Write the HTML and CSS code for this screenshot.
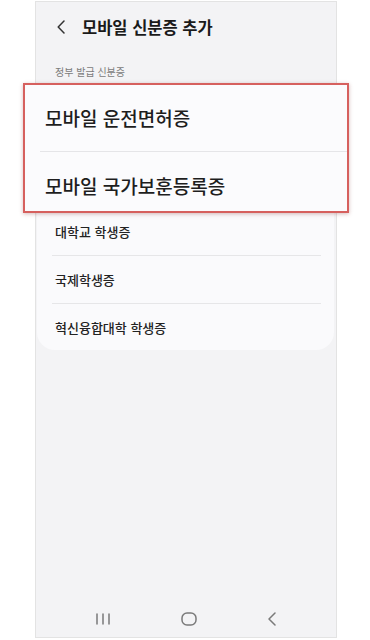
FILE: index.html
```html
<!DOCTYPE html>
<html lang="ko">
<head>
<meta charset="utf-8">
<link rel="stylesheet" href="styles.css">
</head>
<body>
<div class="phone">
  <div class="header">
    <svg class="back" width="8" height="14" viewBox="0 0 8 14"><path d="M7 1 L1.2 7 L7 13" fill="none" stroke="#333" stroke-width="1.5" stroke-linecap="round" stroke-linejoin="round"/></svg>
    <div class="title">모바일 신분증 추가</div>
  </div>
  <div class="section-label">정부 발급 신분증</div>
  <div class="card">
    <div class="highlight">
      <div class="hl-row hl-first">모바일 운전면허증</div>
      <div class="hl-divider"></div>
      <div class="hl-row hl-second">모바일 국가보훈등록증</div>
    </div>
    <div class="row row-first">대학교 학생증</div>
    <div class="row">국제학생증</div>
    <div class="row row-last">혁신융합대학 학생증</div>
  </div>
  <div class="spacer"></div>
  <div class="navbar">
    <svg width="16" height="12" viewBox="0 0 16 12"><path d="M2 1 V11 M8 1 V11 M14 1 V11" stroke="#7a7a7a" stroke-width="1.5" stroke-linecap="round"/></svg>
    <svg width="16" height="14" viewBox="0 0 16 14"><rect x="1" y="1" width="14" height="12" rx="5" fill="none" stroke="#7a7a7a" stroke-width="1.5"/></svg>
    <svg width="10" height="14" viewBox="0 0 10 14"><path d="M8 1 L2 7 L8 13" fill="none" stroke="#7a7a7a" stroke-width="1.5" stroke-linecap="round" stroke-linejoin="round"/></svg>
  </div>
</div>
</body>
</html>
```

FILE: styles.css
```css
* { box-sizing: border-box; }
html, body {
  margin: 0;
  padding: 0;
  background: #ffffff;
}
body {
  font-family: "Noto Sans CJK KR", "Noto Sans", sans-serif;
  color: #1c1c1c;
}
.phone {
  margin: 1px 0 0 35px;
  width: 302px;
  height: 637px;
  border: 1px solid #e3e3e3;
  background: #f3f3f5;
  display: flex;
  flex-direction: column;
}
.header {
  height: 50px;
  display: flex;
  align-items: center;
  padding-left: 21px;
}
.back {
  display: block;
  margin-right: 17px;
}
.title {
  font-size: 16.5px;
  font-weight: 700;
  line-height: 22px;
  color: #1a1a1a;
}
.section-label {
  margin: 13px 0 4px 19px;
  font-size: 10px;
  line-height: 14px;
  color: #7b7b7b;
}
.card {
  margin: 0 2px 0 1px;
  background: #fafafc;
  border-radius: 0 0 18px 18px;
}
.highlight {
  margin: 0 -15px 0 -14px;
  border: 2px solid #d6605e;
  background: #fbfbfd;
  box-shadow: 0 1px 4px rgba(120, 30, 30, 0.3);
}
.hl-row {
  padding-left: 20px;
  font-size: 19px;
  line-height: 24px;
  font-weight: 500;
  color: #1e1e1e;
}
.hl-first { padding-top: 21px; padding-bottom: 21px; }
.hl-second { padding-top: 22px; padding-bottom: 13px; }
.hl-divider {
  height: 1px;
  margin-left: 15px;
  background: #e5e5e8;
}
.row {
  margin: 0 13px 0 15px;
  padding: 14px 0 13px 3px;
  font-size: 13px;
  line-height: 20px;
  font-weight: 500;
  color: #222;
  border-bottom: 1px solid #e6e6e8;
}
.row-first { padding-top: 9px; }
.row-last { border-bottom: none; padding-bottom: 12px; }
.spacer { flex: 1; }
.navbar {
  height: 36px;
  display: flex;
  align-items: center;
  justify-content: center;
  gap: 70px;
}
.navbar svg { display: block; }
```
